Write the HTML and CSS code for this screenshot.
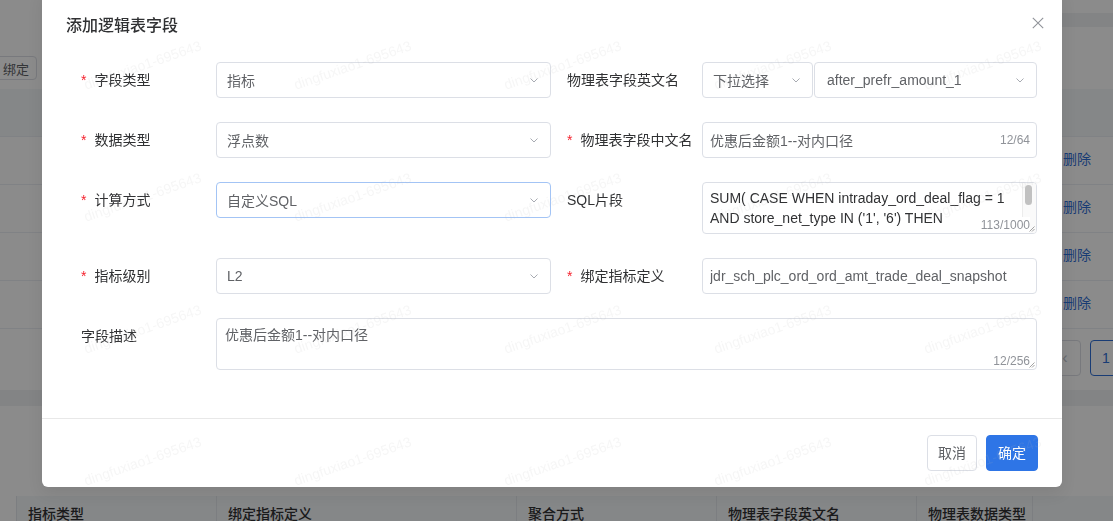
FILE: index.html
```html
<!DOCTYPE html>
<html lang="zh-CN">
<head>
<meta charset="utf-8">
<title>添加逻辑表字段</title>
<link rel="stylesheet" href="styles.css">
</head>
<body>
<div class="page">
  <section class="card card-top">
    <div class="top-strip"></div>
    <div class="toolbar">
      <button class="btn-sm"><svg class="btn-sm-icon" viewBox="0 0 12 12" width="12" height="12"><circle cx="6" cy="6" r="4" fill="none" stroke="#606266" stroke-width="1.2"/></svg><span>绑定</span></button>
    </div>
    <div class="table">
      <div class="thead"></div>
      <div class="trow"><span class="cell-fill"></span><a class="row-action">删除</a></div>
      <div class="trow"><span class="cell-fill"></span><a class="row-action">删除</a></div>
      <div class="trow"><span class="cell-fill"></span><a class="row-action">删除</a></div>
      <div class="trow"><span class="cell-fill"></span><a class="row-action">删除</a></div>
    </div>
    <div class="pager">
      <span class="pg">&lsaquo;</span>
      <span class="pg pg-active">1</span>
    </div>
  </section>
  <section class="card card-bottom">
    <div class="thead2">
      <div class="th th-1">指标类型</div>
      <div class="th th-2">绑定指标定义</div>
      <div class="th th-3">聚合方式</div>
      <div class="th th-4">物理表字段英文名</div>
      <div class="th th-5">物理表数据类型</div>
      <div class="th th-6"></div>
    </div>
  </section>
</div>

<div class="mask"></div>

<div class="modal">
  <div class="modal-header">
    <h2 class="modal-title">添加逻辑表字段</h2>
    <button class="modal-close" aria-label="关闭"><svg viewBox="0 0 12 12" width="12" height="12"><path d="M0.8 0.8 L11.2 11.2 M11.2 0.8 L0.8 11.2" stroke="#909399" stroke-width="1.1" fill="none"/></svg></button>
  </div>
  <div class="modal-body">
    <div class="form-row">
      <div class="form-item item-left">
        <label class="form-label required">字段类型</label>
        <div class="control select"><span class="select-value">指标</span><svg class="chev" viewBox="0 0 12 12" width="12" height="12"><path d="M2.5 4.5 L6 8 L9.5 4.5" fill="none" stroke="#a8abb2" stroke-width="1"/></svg></div>
      </div>
      <div class="form-item item-right">
        <label class="form-label">物理表字段英文名</label>
        <div class="control combo">
          <div class="select select-narrow"><span class="select-value">下拉选择</span><svg class="chev" viewBox="0 0 12 12" width="12" height="12"><path d="M2.5 4.5 L6 8 L9.5 4.5" fill="none" stroke="#a8abb2" stroke-width="1"/></svg></div>
          <div class="select select-grow"><span class="select-value">after_prefr_amount_1</span><svg class="chev" viewBox="0 0 12 12" width="12" height="12"><path d="M2.5 4.5 L6 8 L9.5 4.5" fill="none" stroke="#a8abb2" stroke-width="1"/></svg></div>
        </div>
      </div>
    </div>

    <div class="form-row">
      <div class="form-item item-left">
        <label class="form-label required">数据类型</label>
        <div class="control select"><span class="select-value">浮点数</span><svg class="chev" viewBox="0 0 12 12" width="12" height="12"><path d="M2.5 4.5 L6 8 L9.5 4.5" fill="none" stroke="#a8abb2" stroke-width="1"/></svg></div>
      </div>
      <div class="form-item item-right">
        <label class="form-label required">物理表字段中文名</label>
        <div class="control input"><span class="input-value">优惠后金额1--对内口径</span><span class="input-count">12/64</span></div>
      </div>
    </div>

    <div class="form-row">
      <div class="form-item item-left">
        <label class="form-label required">计算方式</label>
        <div class="control select select-focus"><span class="select-value">自定义SQL</span><svg class="chev" viewBox="0 0 12 12" width="12" height="12"><path d="M2.5 4.5 L6 8 L9.5 4.5" fill="none" stroke="#a8abb2" stroke-width="1"/></svg></div>
      </div>
      <div class="form-item item-right">
        <label class="form-label">SQL片段</label>
        <div class="control textarea textarea-sql">
          <div class="ta-line">SUM( CASE WHEN intraday_ord_deal_flag = 1</div>
          <div class="ta-line">AND store_net_type IN ('1', '6') THEN</div>
          <div class="scroll-track"><div class="scroll-thumb"></div></div>
          <span class="ta-count">113/1000</span>
          <svg class="grip" viewBox="0 0 6 6" width="6" height="6"><path d="M5.5 0.5 L0.5 5.5 M5.5 3 L3 5.5" stroke="#8c8c8c" stroke-width="0.8" fill="none"/></svg>
        </div>
      </div>
    </div>

    <div class="form-row">
      <div class="form-item item-left">
        <label class="form-label required">指标级别</label>
        <div class="control select"><span class="select-value">L2</span><svg class="chev" viewBox="0 0 12 12" width="12" height="12"><path d="M2.5 4.5 L6 8 L9.5 4.5" fill="none" stroke="#a8abb2" stroke-width="1"/></svg></div>
      </div>
      <div class="form-item item-right">
        <label class="form-label required">绑定指标定义</label>
        <div class="control input"><span class="input-value input-clip">jdr_sch_plc_ord_ord_amt_trade_deal_snapshot</span></div>
      </div>
    </div>

    <div class="form-row">
      <div class="form-item item-full">
        <label class="form-label">字段描述</label>
        <div class="control-wide textarea textarea-desc">
          <div class="ta-line">优惠后金额1--对内口径</div>
          <span class="ta-count">12/256</span>
          <svg class="grip" viewBox="0 0 6 6" width="6" height="6"><path d="M5.5 0.5 L0.5 5.5 M5.5 3 L3 5.5" stroke="#8c8c8c" stroke-width="0.8" fill="none"/></svg>
        </div>
      </div>
    </div>
  </div>
  <div class="modal-footer">
    <button class="btn btn-default">取消</button>
    <button class="btn btn-primary">确定</button>
  </div>
</div>

<div class="wm">
  <div class="wm-cell"><span>dingfuxiao1-695643</span></div>
  <div class="wm-cell"><span>dingfuxiao1-695643</span></div>
  <div class="wm-cell"><span>dingfuxiao1-695643</span></div>
  <div class="wm-cell"><span>dingfuxiao1-695643</span></div>
  <div class="wm-cell"><span>dingfuxiao1-695643</span></div>
  <div class="wm-cell"><span>dingfuxiao1-695643</span></div>
  <div class="wm-cell"><span>dingfuxiao1-695643</span></div>
  <div class="wm-cell"><span>dingfuxiao1-695643</span></div>
  <div class="wm-cell"><span>dingfuxiao1-695643</span></div>
  <div class="wm-cell"><span>dingfuxiao1-695643</span></div>
  <div class="wm-cell"><span>dingfuxiao1-695643</span></div>
  <div class="wm-cell"><span>dingfuxiao1-695643</span></div>
  <div class="wm-cell"><span>dingfuxiao1-695643</span></div>
  <div class="wm-cell"><span>dingfuxiao1-695643</span></div>
  <div class="wm-cell"><span>dingfuxiao1-695643</span></div>
  <div class="wm-cell"><span>dingfuxiao1-695643</span></div>
  <div class="wm-cell"><span>dingfuxiao1-695643</span></div>
  <div class="wm-cell"><span>dingfuxiao1-695643</span></div>
  <div class="wm-cell"><span>dingfuxiao1-695643</span></div>
  <div class="wm-cell"><span>dingfuxiao1-695643</span></div>
</div>
</body>
</html>
```

FILE: styles.css
```css
* { box-sizing: border-box; }
html, body { margin: 0; padding: 0; }
body {
  width: 1113px;
  height: 521px;
  overflow: hidden;
  position: relative;
  background: #f0f2f5;
  font-family: "Liberation Sans", "Noto Sans CJK SC", sans-serif;
  font-size: 14px;
  color: #303133;
}

/* ---------- background page ---------- */
.page { display: flex; flex-direction: column; height: 521px; overflow: hidden; }
.card { background: #fff; }
.card-top { padding-bottom: 14px; flex: none; }
.top-strip { height: 14px; margin-top: 13px; margin-left: auto; width: 60px; background: #f0f2f5; }
.toolbar { display: flex; margin-top: 29px; margin-left: -30px; }
.btn-sm {
  width: 67px; height: 24px;
  display: flex; align-items: center; justify-content: flex-end; gap: 6px;
  padding: 0 7px;
  border: 1px solid #dcdfe6; border-radius: 4px; background: #fff;
  color: #606266; font-family: inherit; font-size: 13px;
}
.table { margin-top: 9px; }
.thead { height: 48px; background: #f5f7fa; border-bottom: 1px solid #ebeef5; }
.trow { height: 48px; display: flex; align-items: center; border-bottom: 1px solid #ebeef5; }
.cell-fill { flex: 1; }
.row-action { width: 50px; color: #2f6fd6; font-size: 14px; line-height: 20px; margin-top: -3px; }
.pager { display: flex; justify-content: flex-end; gap: 9px; margin-top: 11px; margin-right: -9px; }
.pg {
  width: 32px; height: 36px; display: flex; align-items: center; justify-content: center;
  border: 1px solid #dcdfe6; border-radius: 4px; color: #c0c4cc; font-size: 16px; background: #fff;
}
.pg-active { border-color: #2f6fd6; color: #2f6fd6; font-size: 14px; }
.card-bottom { margin-top: 16px; padding-top: 90px; flex: 1; }
.thead2 { display: flex; margin-left: 16px; height: 25px; background: #f5f7fa; }
.th { border-left: 1px solid #e4e7ed; padding: 8px 12px 0 11px; line-height: 20px; font-weight: 500; color: #303133; white-space: nowrap; }
.th-1 { width: 200px; }
.th-2 { width: 300px; }
.th-3 { width: 200px; }
.th-4 { width: 200px; }
.th-5 { width: 116px; }
.th-6 { flex: 1; }

/* ---------- mask ---------- */
.mask { position: fixed; inset: 0; background: rgba(0, 0, 0, 0.455); }

/* ---------- modal ---------- */
.modal {
  position: absolute;
  left: 42px;
  top: -10px;
  width: 1020px;
  background: #fff;
  border-radius: 6px;
  box-shadow: 0 6px 16px rgba(0, 0, 0, 0.08);
}
.modal-header {
  display: flex; justify-content: space-between; align-items: flex-start;
  padding: 25px 18px 0 24px;
}
.modal-title { margin: 0; font-size: 16px; line-height: 22px; font-weight: 500; color: #303133; }
.modal-close { width: 12px; height: 12px; margin-top: 2px; padding: 0; border: 0; background: none; display: block; }
.modal-close svg { display: block; }

.modal-body { padding: 25px 25px 48px 24px; }
.form-row { display: flex; gap: 16px; align-items: flex-start; margin-bottom: 24px; }
.form-row:last-child { margin-bottom: 0; }
.form-item { display: flex; align-items: flex-start; }
.item-left { width: 485px; }
.item-right { width: 470px; }
.item-full { width: 971px; }
.form-label { line-height: 36px; font-size: 14px; color: #303133; white-space: nowrap; flex: none; }
.item-left .form-label, .item-full .form-label { width: 150px; padding-left: 15px; }
.item-right .form-label { width: 135px; }
.required::before { content: "*"; color: #f5222d; margin-right: 8px; }

.control { width: 335px; flex: none; }
.control-wide { width: 821px; flex: none; }

.select {
  height: 36px;
  display: flex; align-items: center; justify-content: space-between;
  padding: 0 10px;
  border: 1px solid #dcdfe6; border-radius: 4px; background: #fff;
  color: #606266;
}
.select-focus { border-color: #a3c4f5; }
.select-value { white-space: nowrap; overflow: hidden; }
.chev { flex: none; display: block; }
.combo { display: flex; gap: 1px; }
.select-narrow { width: 111px; flex: none; }
.select-grow { flex: 1; padding-left: 12px; }

.input {
  height: 36px;
  display: flex; align-items: center; gap: 8px;
  padding: 0 6px 0 7px;
  border: 1px solid #dcdfe6; border-radius: 4px; background: #fff;
  color: #606266;
}
.input-value { flex: 1; white-space: nowrap; overflow: hidden; }
.input-clip { margin-right: 1px; }
.input-count { font-size: 12px; color: #909399; flex: none; }

.textarea {
  position: relative;
  height: 52px;
  border: 1px solid #dcdfe6; border-radius: 4px; background: #fff;
  line-height: 20px;
  overflow: hidden;
}
.textarea-sql { padding: 5px 7px; color: #303133; }
.textarea-desc { padding: 6px 8px; color: #606266; }
.ta-line { white-space: nowrap; }
.scroll-track {
  position: absolute; top: 0; right: 0; width: 14px; height: 100%;
  background: #fafafa; border-left: 1px solid #ececec;
}
.scroll-thumb { margin: 2px 0 0 2px; width: 7px; height: 20px; border-radius: 4px; background: #c1c1c1; }
.ta-count {
  position: absolute; right: 6px; bottom: 0;
  font-size: 12px; line-height: 16px; color: #909399; background: #fff;
}
.grip { position: absolute; right: 1px; bottom: 1px; display: block; }

.modal-footer {
  display: flex; justify-content: flex-end; gap: 9px;
  padding: 16px 24px;
  border-top: 1px solid #e8e8e8;
}
.btn { height: 36px; border-radius: 4px; font-family: inherit; font-size: 14px; line-height: 1; }
.btn-default { padding: 0 10px; border: 1px solid #dcdfe6; background: #fff; color: #606266; }
.btn-primary { padding: 0 11px; border: 1px solid #2e75e6; background: #2e75e6; color: #fff; }

/* ---------- watermark ---------- */
.wm {
  position: fixed; top: -1px; left: 37px;
  display: grid; grid-template-columns: repeat(5, 210px); grid-auto-rows: 132px;
  pointer-events: none;
}
.wm-cell { display: flex; align-items: center; justify-content: center; }
.wm-cell span {
  transform: rotate(-19deg);
  font-size: 14px; white-space: nowrap;
  color: rgba(185, 185, 185, 0.13);
}
```
